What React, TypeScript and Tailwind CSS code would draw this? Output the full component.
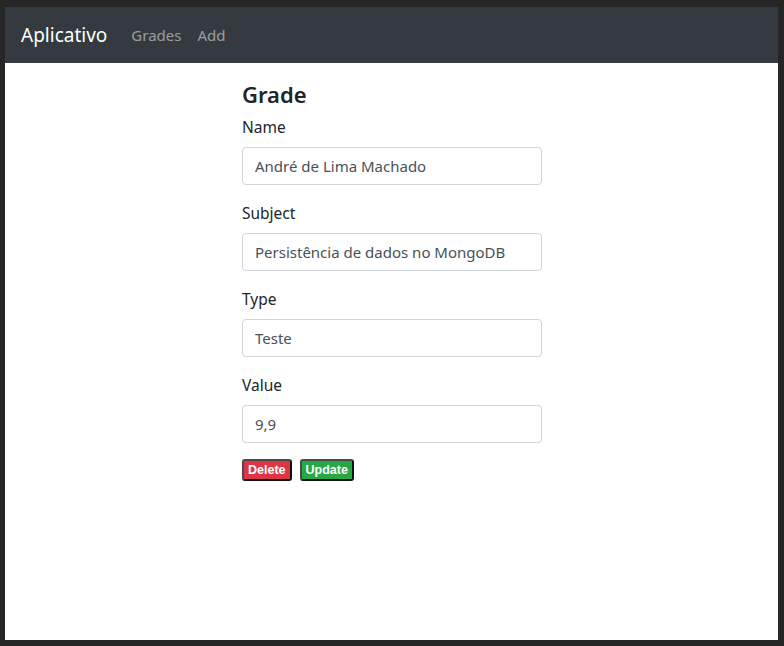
import React from "react";

const fields = [
  { label: "Name", value: "André de Lima Machado" },
  { label: "Subject", value: "Persistência de dados no MongoDB" },
  { label: "Type", value: "Teste" },
  { label: "Value", value: "9,9" },
];

export default function App() {
  return (
    <div
      className="w-[784px] h-[646px] bg-[#262626] pt-[7px] pl-[5px] pr-[6px] pb-[6px]"
      style={{ fontFamily: '"Noto Sans", "Open Sans", sans-serif' }}
    >
      <div className="w-full h-full bg-white flex flex-col">
        <nav className="h-[56px] bg-[#343a40] flex items-center px-4 shrink-0">
          <span className="text-[19px] text-white mr-4 leading-[30px]">Aplicativo</span>
          <span className="text-[15px] text-white/50 px-2">Grades</span>
          <span className="text-[15px] text-white/50 px-2">Add</span>
        </nav>
        <div className="pl-[237px] pt-[18px]">
          <h3 className="text-[22px] font-semibold text-[#212529] leading-[26px] mb-2">Grade</h3>
          {fields.map((f) => (
            <div key={f.label} className="mb-4 w-[300px]">
              <label className="block text-[15.5px] text-[#212529] leading-6 mb-2">{f.label}</label>
              <input
                readOnly
                value={f.value}
                className="w-[300px] h-[38px] border border-[#ced4da] rounded px-3 text-[15px] text-[#495057] outline-none"
                style={{ fontFamily: '"Noto Sans", "Open Sans", sans-serif' }}
              />
            </div>
          ))}
          <div className="flex gap-2 mt-[5px]">
            <button
              className="h-[22px] px-[4px] bg-[#dc3545] text-white text-[12.5px] font-bold rounded-[3px] border-2 border-t-[#4a4a4a] border-l-[#4a4a4a] border-r-[#111] border-b-[#111] leading-none"
              style={{ fontFamily: '"Liberation Sans", Arial, sans-serif' }}
            >
              Delete
            </button>
            <button
              className="h-[22px] px-[4px] bg-[#28a745] text-white text-[12.5px] font-bold rounded-[3px] border-2 border-t-[#4a4a4a] border-l-[#4a4a4a] border-r-[#111] border-b-[#111] leading-none"
              style={{ fontFamily: '"Liberation Sans", Arial, sans-serif' }}
            >
              Update
            </button>
          </div>
        </div>
      </div>
    </div>
  );
}
